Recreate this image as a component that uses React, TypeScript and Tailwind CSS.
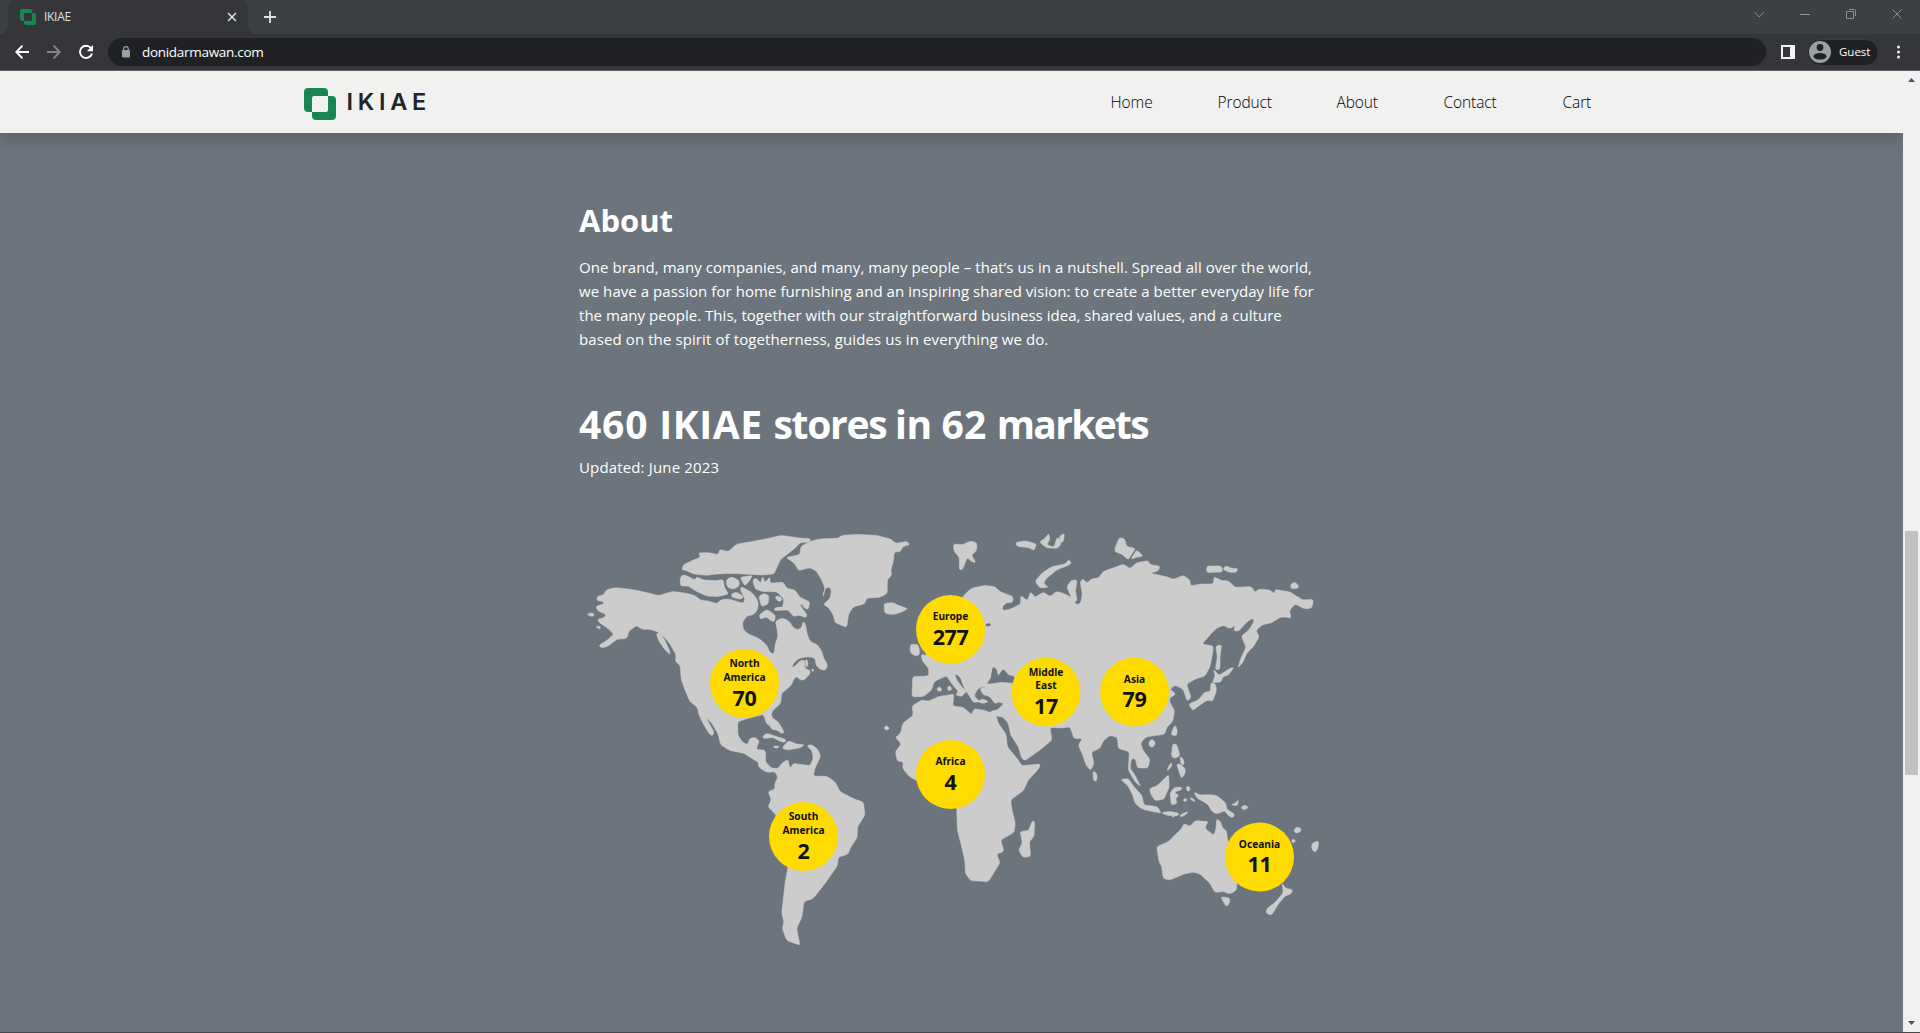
import React from "react";

type Land = { at: [number, number]; shapes: string[] };

/* Coastlines, grouped by region; coordinates are thirds of a pixel from each region's origin. */
const LANDS: Land[] = [
  {
    at: [570, 520],
    shapes: [
      "82 228 102 225 106 212 120 206 140 203 180 208 200 211 235 219 268 227 290 219 310 214 355 221 378 228 390 240 415 243 440 251 455 238 480 238 520 250 525 237 512 212 512 200 530 208 545 218 558 232 565 250 562 272 550 284 530 288 517 308 520 328 535 342 565 354 590 375 600 398 612 402 616 370 624 350 620 320 616 305 625 298 640 294 660 306 668 322 682 330 696 322 698 305 706 310 712 345 722 366 742 374 756 395 760 412 773 435 768 450 752 450 738 435 735 414 715 410 690 414 675 425 665 440 672 442 690 422 705 420 704 445 722 452 718 465 702 480 690 480 680 468 670 480 665 495 635 520 632 550 605 575 605 592 625 606 642 635 638 642 620 630 605 628 598 615 590 612 580 583 555 590 530 596 502 606 504 648 518 668 534 674 538 658 553 652 566 660 558 688 585 692 587 740 545 715 530 702 490 692 455 672 446 642 425 610 405 588 400 568 412 600 432 636 428 648 418 642 400 612 385 580 383 563 360 545 345 510 334 480 330 435 316 425 318 404 300 372 280 348 262 335 240 328 215 328 200 316 175 335 172 355 140 358 115 378 95 384 86 376 110 362 132 342 120 332 110 322 90 310 82 298 105 292 108 283 82 272 78 258 102 252 100 244 80 242",
      "258 340 268 365 285 390 302 404 296 385 284 360 272 340",
      "335 150 340 134 375 118 392 112 386 98 415 98 446 104 448 88 475 95 500 72 540 66 590 56 635 46 690 54 722 56 720 66 690 68 675 85 655 100 632 118 622 140 612 162 580 165 480 160 440 162 410 166 370 162 350 152",
      "335 165 350 167 375 180 380 170 400 180 440 182 460 178 462 200 476 222 445 230 410 228 375 212 355 198 332 198 330 180",
      "468 180 485 170 508 182 508 198 490 208 472 202",
      "510 172 548 166 540 180 525 198", "483 222 500 216 522 230 512 238 486 232",
      "548 178 560 175 572 190 578 168 585 188 600 170 600 190 640 186 650 205 675 210 690 232 720 246 714 270 700 262 696 250 690 255 712 285 706 294 690 285 670 290 655 270 612 272 615 262 638 262 642 238 620 215 600 215 575 214 555 206",
      "566 230 580 220 597 226 595 252 575 260", "614 230 630 228 638 240 625 246",
      "568 284 590 268 616 285 614 306 598 300 590 290 570 298",
      "50 282 68 278 74 286 62 290", "76 320 92 318 90 328",
      "578 648 590 640 615 648 648 658 645 668 625 662 610 652 580 656", "636 684 655 662 680 672 704 674 690 684 650 690", "610 678 628 678 624 684 612 684",
      "706 420 712 418 714 438 708 442", "722 448 732 448 730 456",
    ],
  },
  {
    at: [770, 520],
    shapes: [
      "48 112 90 104 92 80 120 64 155 56 205 55 215 46 260 43 320 46 365 58 375 70 412 64 420 74 398 80 392 95 373 96 370 125 362 150 366 165 352 178 352 220 330 232 290 234 284 252 250 260 236 282 230 322 215 316 195 308 190 285 175 262 160 254 182 232 184 206 172 200 160 216 160 232 165 205 155 180 138 152 120 143 85 152 75 132",
      "342 250 370 248 385 256 414 266 395 276 370 284 344 280",
      "550 72 580 74 600 63 621 68 620 92 604 105 618 128 605 126 592 112 578 148 568 150 568 112 552 94",
      "422 372 445 374 450 402 438 409 420 398",
      "500 503 512 500 516 512 504 515", "532 500 542 497 546 510 534 514", "622 545 638 536 656 545 638 551",
      "453 405 462 402 470 420 458 424",
      "340 624 350 616 360 626 350 631",
      "630 505 645 500 648 512 636 520",
    ],
  },
  {
    at: [970, 520],
    shapes: [
      "-18 225 5 205 45 196 75 200 90 215 130 230 128 248 108 248 97 260 98 272 120 268 152 252 152 226 172 242 182 215 195 232 220 216 240 230 260 214 280 220 304 232 290 200 305 180 322 180 316 215 322 242 312 246 320 254 332 250 337 220 330 185 340 176 350 190 365 176 385 174 400 154 435 142 460 132 480 146 500 128 535 122 540 134 570 138 566 152 542 160 590 170 610 178 640 166 660 180 662 198 690 192 730 192 732 170 755 182 775 182 795 202 845 200 855 218 865 207 900 210 914 222 914 208 960 216 985 232 1000 240 1030 238 1026 264 1005 267 975 252 958 272 964 294 935 290 905 308 875 315 858 332 868 350 850 380 830 400 820 425 804 444 812 415 828 382 814 348 835 332 852 305 850 295 835 302 805 334 790 332 797 316 780 326 760 316 740 324 720 345 696 372 730 378 728 400 720 440 705 468 675 478 650 492 656 512 664 532 652 544 645 525 640 508 615 495 600 508 618 522 598 535 600 548 614 572 608 605 590 622 585 642 550 648 530 650 512 668 518 690 540 718 534 744 502 744 496 715 484 716 480 745 495 765 512 800 495 785 475 750 478 695 445 686 442 652 420 646 400 662 390 685 364 696 372 730 362 752 348 735 338 705 325 675 338 655 312 656 300 620 280 624 240 622 246 660 210 690 165 722 155 715 145 680 122 645 115 610 100 592 82 588 72 584 62 572 80 572 102 550 85 546 75 552 60 530 35 522 48 500 32 500 20 512 12 528 30 545 10 548 0 530 -15 510 -30 470 -46 460 -40 480 -25 500 -10 516 -18 520 -24 530 -44 525 -34 514 -50 498 -70 468 -90 476 -108 485 -115 510 -140 530 -174 530 -172 470 -124 468 -124 445 -145 420 -130 400 -90 400 -60 300",
      "434 88 448 52 466 58 468 78 497 86 485 102 475 120 455 102 436 96", "482 118 500 90 520 108 500 112",
      "136 68 165 62 200 72 192 92 175 82 142 80", "208 66 225 55 236 40 240 58 230 74 252 82 260 55 266 52 274 72 262 85 230 84", "268 48 284 40 280 65 272 70",
      "195 184 215 160 245 140 285 132 298 118 304 132 260 150 230 175 220 190 236 202 210 204",
      "369 752 382 762 380 784 370 782",
    ],
  },
  {
    at: [1120, 520],
    shapes: [
      "206 552 235 540 255 515 272 515 272 488 286 490 290 510 278 544 262 540 240 555 218 572",
      "280 448 298 466 330 445 342 442 325 465 308 470 304 486 276 488 286 468",
      "287 378 305 374 300 410 300 448 286 450 292 410",
      "260 138 305 138 308 156 260 158", "308 148 318 136 330 144 355 146 348 158 325 156",
      "512 192 526 186 538 202 528 206 512 206",
    ],
  },
  {
    at: [700, 720],
    shapes: [
      "30 -10 115 -10 110 40 128 68 145 77 148 56 165 52 178 65 166 90 196 90 196 125 215 145 235 145 245 130 264 118 270 145 280 130 330 137 340 115 335 90 320 78 332 73 352 86 362 108 345 145 340 168 380 169 405 185 420 215 465 238 490 246 495 285 472 322 472 352 450 385 445 402 415 412 412 438 375 490 340 535 312 545 306 590 290 625 300 676 285 670 260 662 247 625 252 605 245 580 255 490 264 440 228 285 204 260 214 240 204 214 225 208 224 190 234 172 225 155 200 157 176 142 174 122 150 112 130 98 90 92 62 74 55 45",
    ],
  },
  {
    at: [880, 680],
    shapes: [
      "96 78 125 60 145 64 175 50 222 42 218 78 250 82 275 104 282 86 310 90 330 98 350 90 380 88 380 110 348 106 355 130 378 162 382 200 415 240 425 257 482 252 475 268 445 300 430 332 392 360 395 385 406 430 402 458 362 480 372 514 350 522 360 548 325 605 272 602 256 580 255 545 245 500 232 450 230 380 150 330 108 300 90 292 68 265 70 245 52 244 46 215 64 192 46 172 62 160 68 130 100 106",
      "456 424 464 424 462 470 448 485 452 530 428 532 416 510 427 488 420 454 446 452",
    ],
  },
  {
    at: [1100, 680],
    shapes: [
      "170 500 205 485 245 445 252 430 270 440 285 422 325 424 314 444 342 466 348 445 350 416 362 425 368 445 380 452 382 478 420 560 410 615 410 630 390 642 370 634 345 638 330 610 300 582 280 576 250 583 210 600 190 596 185 560 177 545",
      "362 650 390 654 388 672 378 680", "546 608 556 625 578 628 574 642 555 648 535 672 515 706 498 700 500 686 525 668 550 638",
      "282 336 300 345 325 344 350 346 378 370 380 388 404 402 400 414 385 408 375 392 350 402 335 394 325 374 305 362 290 354",
      "148 326 170 318 206 284 208 320 192 358 165 362 154 346", "62 298 85 296 100 318 125 345 132 375 172 380 184 400 150 393 125 387 105 370 98 345 84 318",
      "184 398 210 394 238 400 232 408 200 406", "238 406 264 394 262 400 244 412", "214 405 224 406 220 414",
      "210 338 224 322 246 322 244 330 222 336 238 348 226 354 232 370 214 376",
      "218 192 230 192 240 228 222 236 214 228", "230 252 240 252 257 266 254 284 244 296", "240 228 252 240 252 256 242 252", "214 246 216 258 202 274 202 266",
      "225 134 232 150 230 168 212 164", "146 186 156 176 168 190 158 202 148 200", "257 322 266 318 272 328 264 336", "250 358 258 354 262 362 252 366",
      "268 354 278 354 288 366 276 362", "582 446 596 440 606 450 594 460 584 458", "636 490 656 482 654 506 644 518 634 504", "422 382 436 374 446 384 430 390", "392 374 406 370 416 358 412 378",
      "574 482 580 476 588 484 578 490",
    ],
  },
];

/* Inland water cut back out of the continents. */
const SEAS = ["50 492 62 475 68 440 80 446 84 468 100 446 116 466 134 468 134 490 95 486 70 490", "44 315 56 308 66 314 54 321"];

/* Closed outline through the points, each corner rounded by at most 7 units. */
function smooth(src: string) {
  const n = src.split(" ").map(Number);
  const p: [number, number][] = [];
  for (let i = 0; i < n.length; i += 2) p.push([n[i], n[i + 1]]);
  const toward = (a: [number, number], b: [number, number]) => {
    const len = Math.hypot(b[0] - a[0], b[1] - a[1]) || 1;
    const t = Math.min(0.5, 7 / len);
    return `${(a[0] + (b[0] - a[0]) * t).toFixed(1)} ${(a[1] + (b[1] - a[1]) * t).toFixed(1)}`;
  };
  return (
    p
      .map((q, i) => {
        const prev = p[(i + p.length - 1) % p.length];
        const next = p[(i + 1) % p.length];
        return `${i ? "L" : "M"}${toward(q, prev)}Q${q[0]} ${q[1]} ${toward(q, next)}`;
      })
      .join("") + "Z"
  );
}

const PINS = [
  { name: ["North", "America"], count: 70, x: 744.5, y: 683.5 },
  { name: ["South", "America"], count: 2, x: 803.5, y: 836.5 },
  { name: ["Europe"], count: 277, x: 950.5, y: 629.5 },
  { name: ["Africa"], count: 4, x: 950.5, y: 774.5 },
  { name: ["Middle", "East"], count: 17, x: 1046, y: 692 },
  { name: ["Asia"], count: 79, x: 1134.5, y: 692 },
  { name: ["Oceania"], count: 11, x: 1259.5, y: 857 },
];

function WorldMap() {
  return (
    <svg className="block h-[430px] w-[750px]" viewBox="579 520 750 430">
      {LANDS.map((l, i) => (
        <g key={i} transform={`translate(${l.at[0]} ${l.at[1]}) scale(.33333)`} fill="#cccccc" stroke="#cccccc" strokeWidth="1.5" strokeLinejoin="round">
          {l.shapes.map((s, j) => (
            <path key={j} d={smooth(s)} />
          ))}
        </g>
      ))}
      <g transform="translate(970 520) scale(.33333)" fill="#6c757d">
        {SEAS.map((s, i) => (
          <path key={i} d={smooth(s)} />
        ))}
      </g>
      {PINS.map((p) => (
        <g key={p.name.join()} transform={`translate(${p.x} ${p.y})`} textAnchor="middle" fill="#111111" className="font-['Noto_Sans',sans-serif] font-bold">
          <circle r="34.5" fill="#ffdb00" />
          {p.name.map((t, i) => (
            <text key={t} y={p.name.length === 2 ? -16.5 + i * 13.8 : -9.5} fontSize="10.2">
              {t}
            </text>
          ))}
          <text y={p.name.length === 2 ? 22 : 15} fontSize="21.5" letterSpacing="-0.4">
            {p.count}
          </text>
        </g>
      ))}
    </svg>
  );
}

function Logo({ className }: { className: string }) {
  return (
    <svg className={className} viewBox="0 0 16 16" fill="#198754">
      <path d="M0 2a2 2 0 0 1 2-2h8a2 2 0 0 1 2 2v2H5a1 1 0 0 0-1 1v7H2a2 2 0 0 1-2-2zM12 4h2a2 2 0 0 1 2 2v8a2 2 0 0 1-2 2H6a2 2 0 0 1-2-2v-2h7a1 1 0 0 0 1-1z" />
    </svg>
  );
}

function TabStrip() {
  return (
    <div className="flex h-[34px] bg-[#3c4043]">
      <div className="flex h-full w-2 items-end bg-[#35363a]">
        <div className="h-full w-2 rounded-br-lg bg-[#3c4043]" />
      </div>
      <div className="flex w-[240px] items-center rounded-t-lg bg-[#35363a] pl-3">
        <Logo className="size-4" />
        <span className="ml-2 flex-1 font-['Open_Sans',sans-serif] text-[12px] tracking-[-0.3px] text-[#dee1e6]">IKIAE</span>
        <svg className="mr-[11px] size-[10px]" viewBox="0 0 10 10" stroke="#dee1e6" strokeWidth="1.5">
          <path d="M1 1l8 8M9 1l-8 8" />
        </svg>
      </div>
      <div className="h-full w-2 bg-[#35363a]">
        <div className="h-full w-2 rounded-bl-lg bg-[#3c4043]" />
      </div>
      <svg className="mt-[11px] ml-2 size-3" viewBox="0 0 12 12" stroke="#dee1e6" strokeWidth="1.8">
        <path d="M6 0v12M0 6h12" />
      </svg>
      <div className="flex-1" />
      <div className="flex h-7 items-center gap-9 pr-[18px]">
        {["M.5 3l4.7 5L10 3", "M0 5.5h10", "M.5 2.5h7v7h-7zM3 .5h5.500a1 1 0 0 1 1 1V7", "M.5.5l9 9M9.500.5l-9 9"].map((d) => (
          <svg key={d} className="size-[10px] overflow-visible" viewBox="0 0 10 10" fill="none" stroke="#8e9092">
            <path d={d} />
          </svg>
        ))}
      </div>
    </div>
  );
}

function Toolbar() {
  return (
    <div className="flex h-[37px] items-center border-b border-[#625f66] bg-[#35363a] font-['Open_Sans',sans-serif] text-white">
      <svg className="ml-[15px] size-[14px]" viewBox="0 0 14 14" fill="none" stroke="#fff" strokeWidth="1.9">
        <path d="M14 7H1.500M7.500.700L1.300 7l6.200 6.300" />
      </svg>
      <svg className="ml-[18px] size-[14px]" viewBox="0 0 14 14" fill="none" stroke="#85868a" strokeWidth="1.9">
        <path d="M0 7h12.500M6.500.700L12.700 7l-6.200 6.300" />
      </svg>
      <svg className="ml-[18px] size-[14px]" viewBox="0 0 14 14">
        <path d="M12 3.200A6.100 6.100 0 1 0 13 8.500" fill="none" stroke="#fff" strokeWidth="1.900" />
        <path d="M14 0v6.200H7.800z" fill="#fff" />
      </svg>
      <div className="ml-[15px] flex h-7 w-[1658px] items-center rounded-full bg-[#202124] pl-[14px]">
        <svg className="h-[12px] w-[8px]" viewBox="0 0 8 12">
          <rect y="4" width="8" height="7.500" rx="1" fill="#9aa0a6" />
          <path d="M1.800 4.500V2.800a2.200 2.200 0 0 1 4.400 0v1.700" fill="none" stroke="#9aa0a6" strokeWidth="1.200" />
        </svg>
        <span className="ml-3 pt-px text-[13.5px] tracking-[-0.3px]">donidarmawan.com</span>
      </div>
      <svg className="ml-[15px] size-[14px]" viewBox="0 0 14 14">
        <path d="M0 0h14v14H0zM2 2v10h7V2z" fill="#f1f3f4" fillRule="evenodd" />
      </svg>
      <div className="ml-3 flex h-[27px] w-[72px] items-center rounded-full border border-[#3c3d41] bg-[#202124]">
        <svg className="ml-[1px] size-[22px]" viewBox="0 0 22 22">
          <circle cx="11" cy="11" r="11" fill="#9aa0a6" />
          <circle cx="11" cy="6.500" r="3.400" fill="#202124" />
          <ellipse cx="11" cy="15.300" rx="6.500" ry="3.300" fill="#202124" />
        </svg>
        <span className="ml-2 text-[11.500px]">Guest</span>
      </div>
      <svg className="ml-[18px] h-[14px] w-[3px]" viewBox="0 0 3 14" fill="#f1f3f4">
        <circle cx="1.500" cy="2" r="1.500" />
        <circle cx="1.500" cy="7" r="1.500" />
        <circle cx="1.500" cy="12" r="1.500" />
      </svg>
    </div>
  );
}

export default function App() {
  return (
    <div className="flex h-[1033px] w-[1920px] flex-col overflow-hidden border-b border-[#46484b] bg-[#6c757d]">
      <TabStrip />
      <Toolbar />
      <div className="flex min-h-0 flex-1">
        <div className="flex min-w-0 flex-1 flex-col overflow-hidden">
          <header className="flex h-[62px] shrink-0 justify-center bg-[#f1f1f0] shadow-[0_8px_16px_rgba(0,0,0,0.15)]">
            <div className="flex w-[1296px] items-center">
              <Logo className="mt-1 size-8" />
              <span className="ml-[11px] font-['Inter',sans-serif] text-[23.5px] font-semibold tracking-[4.7px] text-[#212529]">IKIAE</span>
              <nav className="mt-[2px] ml-auto flex font-['Open_Sans',sans-serif] text-[15.5px] font-light tracking-[-0.1px] text-black">
                <span className="w-[107px]">Home</span>
                <span className="w-[119px]">Product</span>
                <span className="w-[107px]">About</span>
                <span className="w-[119px]">Contact</span>
                <span className="w-[37px]">Cart</span>
              </nav>
            </div>
          </header>
          <main className="flex flex-1 flex-col pl-[579px] font-['Open_Sans',sans-serif] whitespace-nowrap text-white">
            <h2 className="mt-[68px] text-[31px] leading-[38px] font-bold">About</h2>
            <p className="mt-4 text-[15px] leading-6 tracking-[0.06px]">
              One brand, many companies, and many, many people – that’s us in a nutshell. Spread all over the world,
              <br />
              we have a passion for home furnishing and an inspiring shared vision: to create a better everyday life for
              <br />
              <span className="tracking-[0.03px]">the many people. This, together with our straightforward business idea, shared values, and a culture</span>
              <br />
              <span className="tracking-[0.1px]">based on the spirit of togetherness, guides us in everything we do.</span>
            </p>
            <h1 className="mt-[49px] text-[39px] leading-[48px] font-bold tracking-[-0.45px]">
              <span className="tracking-[0.8px]">460 </span>
              <span className="tracking-[0.6px]">IKIAE </span>
              <span className="tracking-[-1.3px]">stores </span>
              in <span className="tracking-[0.2px]">62 </span>
              <span className="tracking-[-1.7px]">markets</span>
            </h1>
            <p className="mt-[7px] text-[15px] leading-6 tracking-[0.15px]">Updated: June 2023</p>
            <div className="mt-[41px]">
              <WorldMap />
            </div>
          </main>
        </div>
        <div className="flex w-[17px] flex-col items-center bg-[#f1f1f1]">
          <svg className="mt-[7px] h-1 w-[7px]" viewBox="0 0 7 4" fill="#505050">
            <path d="M0 4L3.500 0 7 4z" />
          </svg>
          <div className="mt-[449px] h-[244px] w-[13px] shrink-0 bg-[#c1c1c1]" />
          <div className="flex-1" />
          <svg className="mb-[7px] h-1 w-[7px]" viewBox="0 0 7 4" fill="#505050">
            <path d="M0 0h7L3.500 4z" />
          </svg>
        </div>
      </div>
    </div>
  );
}
